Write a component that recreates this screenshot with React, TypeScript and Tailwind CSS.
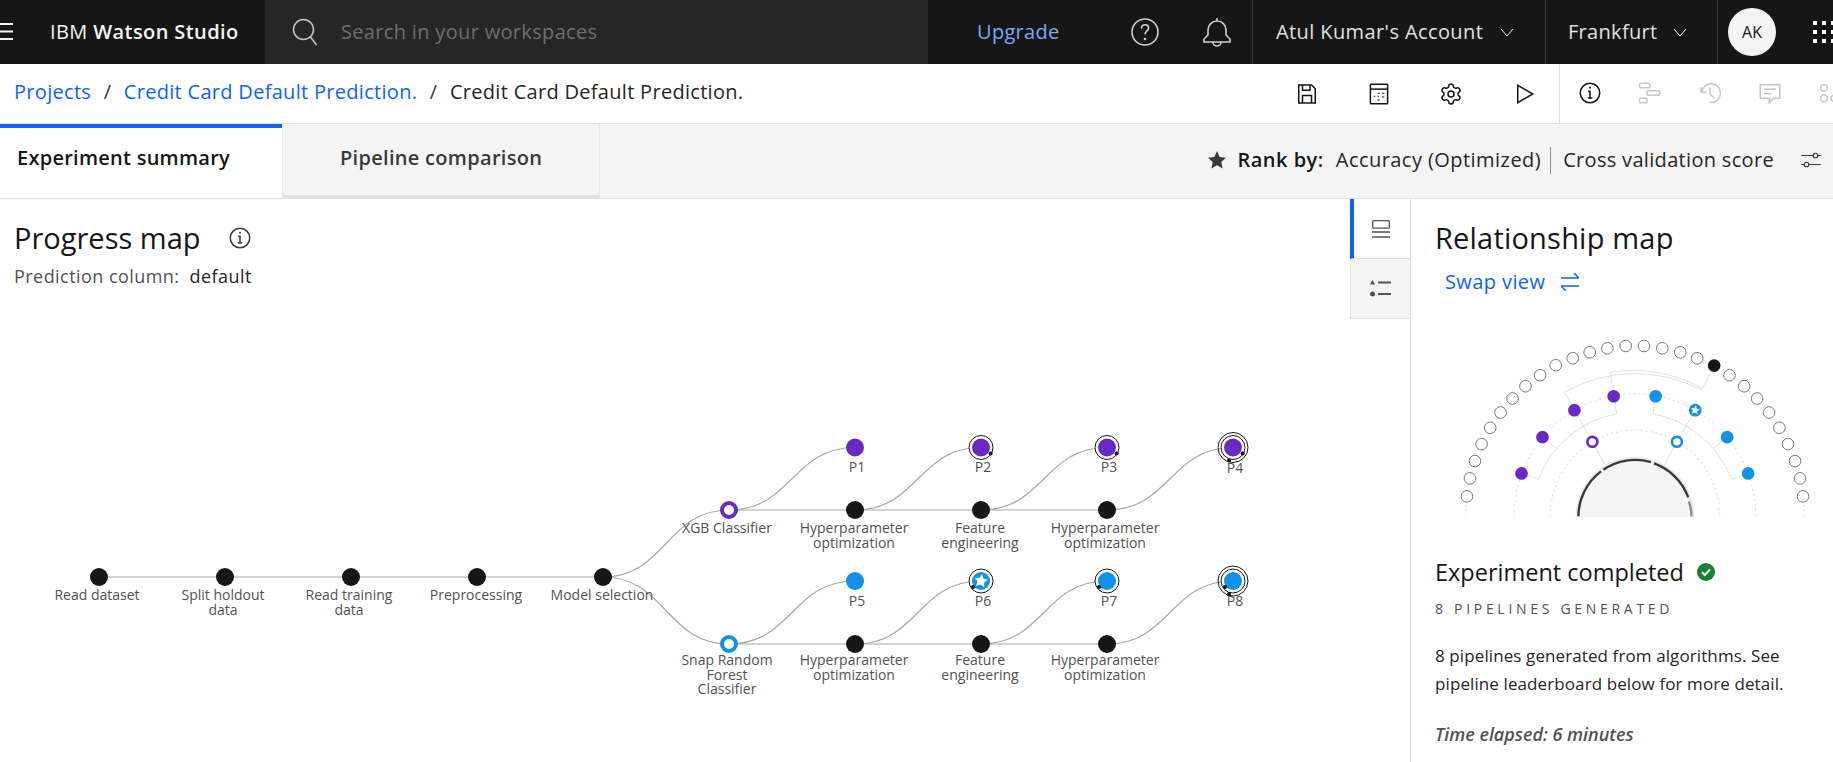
import React from "react";
import { Settings } from "lucide-react";

const PURPLE = "#6929c4";
const BLUE = "#1192e8";
const INK = "#161616";

const Icon = ({ children, size = 24, view = 32, className = "" }: { children: React.ReactNode; size?: number; view?: number; className?: string }) => (
  <svg width={size} height={size} viewBox={`0 0 ${view} ${view}`} fill="none" stroke="currentColor" strokeWidth={2} className={`shrink-0 ${className}`}>
    {children}
  </svg>
);

const Chevron = () => (
  <svg width="16" height="16" viewBox="0 0 16 16" fill="none" stroke="currentColor" strokeWidth={1} className="shrink-0">
    <path d="M2 5l6 7 6-7" />
  </svg>
);

const InfoIcon = ({ size = 24 }: { size?: number }) => (
  <Icon size={size}>
    <circle cx="16" cy="16" r="13" />
    <path d="M13 22.5h6M16 22.5V13.5h-2.5" />
    <circle cx="16" cy="9" r="1.4" fill="currentColor" stroke="none" />
  </Icon>
);

const Header = () => (
  <header className="flex h-16 items-stretch bg-[#161616] text-[#f4f4f4]">
    <div className="flex w-[265px] shrink-0 items-center">
      <svg width="13" height="18" viewBox="0 0 13 18" className="shrink-0">
        <path d="M0 1h13M0 8.5h13M0 16h13" stroke="#f4f4f4" strokeWidth={2} />
      </svg>
      <span className="ml-[37px] whitespace-nowrap text-[20px] tracking-[0.4px]">
        IBM <span className="font-semibold">Watson Studio</span>
      </span>
    </div>
    <div className="flex w-[663px] shrink-0 items-center bg-[#262626] pl-[27px] text-[#c6c6c6]">
      <svg width="26" height="28" viewBox="0 0 26 28" fill="none" stroke="currentColor" strokeWidth={1.5} className="shrink-0">
        <circle cx="11.5" cy="11.5" r="10" />
        <path d="M18.5 19l6 8" />
      </svg>
      <span className="ml-[23px] text-[20px] tracking-[0.33px] text-[#6f6f6f]">Search in your workspaces</span>
    </div>
    <div className="flex w-[324px] shrink-0 items-center text-[#d0d0d0]">
      <a href="#" className="ml-[49px] text-[20px] tracking-[0.3px] text-[#78a9ff]">Upgrade</a>
      <Icon size={32} className="ml-[69px]">
        <circle cx="16" cy="16" r="13" strokeWidth={1.6} />
        <path d="M12.5 12.5c0-2.3 1.6-3.7 3.6-3.7s3.5 1.4 3.5 3.3c0 3.2-3.6 3-3.6 6.4" strokeWidth={1.6} />
        <circle cx="16" cy="23" r="1.3" fill="currentColor" stroke="none" />
      </Icon>
      <Icon size={32} className="ml-[40px]">
        <path d="M16 2v3M16 5a9 9 0 0 0-9 9v5l-4 4v3h26v-3l-4-4v-5a9 9 0 0 0-9-9zM12 26a4 4 0 0 0 8 0" strokeWidth={1.6} />
      </Icon>
    </div>
    <div className="flex w-[293px] shrink-0 items-center border-l border-[#393939] pl-[23px]">
      <span className="whitespace-nowrap text-[20px] tracking-[0.4px] text-[#e0e0e0]">Atul Kumar&#39;s Account</span>
      <span className="ml-[16px]"><Chevron /></span>
    </div>
    <div className="flex w-[172px] shrink-0 items-center border-l border-[#393939] pl-[22px]">
      <span className="text-[20px] tracking-[0.3px] text-[#e0e0e0]">Frankfurt</span>
      <span className="ml-[15px]"><Chevron /></span>
    </div>
    <div className="flex flex-1 items-center border-l border-[#393939] pl-[10px]">
      <div className="flex h-12 w-12 shrink-0 items-center justify-center rounded-full bg-[#f4f4f4] text-[16px] text-[#161616]">AK</div>
      <div className="ml-[37px] grid shrink-0 grid-cols-[repeat(3,4px)] gap-x-[5px] gap-y-[5px]">
        {Array.from({ length: 9 }).map((_, i) => (
          <span key={i} className="h-1 w-1 bg-white" />
        ))}
      </div>
    </div>
  </header>
);

const Toolbar = () => (
  <div className="flex h-[59px] items-stretch bg-white">
    <nav className="flex flex-1 items-center whitespace-nowrap pb-[4px] pl-[14px] text-[20px] tracking-[0.3px]">
      <a href="#" className="text-[#0f62fe]">Projects</a>
      <span className="mx-[12.5px] text-[#393939]">/</span>
      <a href="#" className="text-[#0f62fe]">Credit Card Default Prediction.</a>
      <span className="mx-[12.5px] text-[#393939]">/</span>
      <span className="text-[#262626]">Credit Card Default Prediction.</span>
    </nav>
    <div className="flex items-center gap-[48px] pr-[24px] text-[#161616]">
      <Icon>
        <path d="M5 4h17l5 5v19H5zM10 28V18h12v10M10 4v7h10V4" />
      </Icon>
      <Icon>
        <rect x="4.500" y="3" width="23" height="26" rx="1" />
        <path d="M4.500 9.500h23" />
        <path d="M14 15h3M20 15h3M9 19h2M14 19h2M20 20h3M14 24h3" strokeWidth={1.6} />
      </Icon>
      <Settings size={24} strokeWidth={1.5} className="shrink-0" />
      <Icon>
        <path d="M9 4.500L29 16 9 27.500z" />
      </Icon>
    </div>
    <div className="flex w-[274px] shrink-0 items-center gap-[36px] overflow-hidden border-l border-[#e0e0e0] pb-[2px] pl-[18px] text-[#c6c6c6]">
      <span className="text-[#161616]"><InfoIcon /></span>
      <Icon>
        <rect x="2" y="3" width="14" height="6" rx="1.500" />
        <rect x="12" y="13" width="17" height="6" rx="1.500" />
        <rect x="2" y="23" width="10" height="6" rx="1.500" />
      </Icon>
      <Icon>
        <path d="M4 8v7h7M5 15A12.500 12.500 0 1 1 16 28.500M16 9v8l6 6" />
      </Icon>
      <Icon>
        <path d="M3 5h26v18H20l-4 6h-2l2-6H3zM8 11h16M8 17h10" />
      </Icon>
      <Icon>
        <circle cx="8" cy="9" r="4.500" />
        <circle cx="8" cy="23" r="4.500" />
        <circle cx="22" cy="23" r="4.500" />
      </Icon>
    </div>
  </div>
);

const Tabs = () => (
  <div className="flex h-[76px] items-stretch border-y border-[#e0e0e0] bg-[#f4f4f4]">
    <div className="flex w-[282px] shrink-0 items-center border-t-4 border-[#0f62fe] bg-white pb-[10px] pl-[17px] text-[20px] font-semibold tracking-[0.26px] text-[#161616]">
      Experiment summary
    </div>
    <div className="flex w-[318px] shrink-0 items-center border-x border-b-[3px] border-x-[#e8e8e8] border-b-[#e0e0e0] pb-[3px] pl-[57px] text-[20px] font-semibold tracking-[0.3px] text-[#393939]">
      Pipeline comparison
    </div>
    <div className="flex flex-1 items-center justify-end pb-[2px] pr-[10px] text-[#161616]">
      <svg width="20" height="20" viewBox="0 0 20 20" fill="#393939" className="shrink-0">
        <path d="M10 1l2.700 6 6.300.7-4.700 4.300 1.300 6.500L10 15.200 4.400 18.500 5.700 12 1 7.700 7.300 7z" />
      </svg>
      <span className="ml-[10px] text-[20px] font-semibold tracking-[0.5px]">Rank by:</span>
      <span className="ml-[12px] text-[20px] tracking-[0.45px] text-[#262626]">Accuracy (Optimized)</span>
      <span className="ml-[9px] h-[27px] w-px bg-[#8d8d8d]" />
      <span className="ml-[12px] text-[20px] tracking-[0.32px] text-[#262626]">Cross validation score</span>
      <Icon size={24} className="ml-[25px] text-[#393939]">
        <path d="M3 10h16M25 10h4M3 22h4M13 22h16" strokeWidth={1.6} />
        <circle cx="22" cy="10" r="3" strokeWidth={1.6} />
        <circle cx="10" cy="22" r="3" strokeWidth={1.6} />
      </Icon>
    </div>
  </div>
);

const curve = (x1: number, y1: number, x2: number, y2: number) => {
  const mid = (x1 + x2) / 2;
  return `M${x1} ${y1}C${mid} ${y1} ${mid} ${y2} ${x2} ${y2}`;
};

// x centre, first baseline, box width (the width decides where a label wraps), text
const labels: [number, number, number, string][] = [
  [97, 600, 130, "Read dataset"],
  [223, 600, 96, "Split holdout data"],
  [349, 600, 96, "Read training data"],
  [476, 600, 130, "Preprocessing"],
  [602, 600, 130, "Model selection"],
  [727, 533, 130, "XGB Classifier"],
  [727, 665, 96, "Snap Random Forest Classifier"],
  [854, 533, 120, "Hyperparameter optimization"],
  [980, 533, 96, "Feature engineering"],
  [1105, 533, 120, "Hyperparameter optimization"],
  [854, 665, 120, "Hyperparameter optimization"],
  [980, 665, 96, "Feature engineering"],
  [1105, 665, 120, "Hyperparameter optimization"],
  [857, 472, 40, "P1"],
  [983, 472, 40, "P2"],
  [1109, 472, 40, "P3"],
  [1235, 473, 40, "P4"],
  [857, 606, 40, "P5"],
  [983, 606, 40, "P6"],
  [1109, 606, 40, "P7"],
  [1235, 606, 40, "P8"],
];

const Star = ({ x, y, r }: { x: number; y: number; r: number }) => {
  const pts = Array.from({ length: 10 })
    .map((_, i) => {
      const a = (Math.PI / 5) * i - Math.PI / 2 + 0.15;
      const rad = i % 2 === 0 ? r : r * 0.5;
      return `${x + rad * Math.cos(a)},${y + rad * Math.sin(a)}`;
    })
    .join(" ");
  return <polygon points={pts} fill="#fff" />;
};

const Ringed = ({ x, y, fill, rings, left }: { x: number; y: number; fill: string; rings: number; left?: boolean }) => {
  const dx = left ? -8 : 9.6;
  return (
    <g>
      <circle cx={x} cy={y} r="12" fill="#fff" stroke={INK} />
      {rings > 1 && <circle cx={x} cy={y} r="15" fill="none" stroke={INK} />}
      <circle cx={x} cy={y} r="9" fill={fill} />
      <circle cx={x + dx} cy={y + 6} r="2" fill={INK} />
      {rings > 1 && <circle cx={x - 4} cy={y + 13} r="2" fill={INK} />}
    </g>
  );
};

const ProgressMap = () => {
  const stem = [99, 225, 351, 477, 603];
  const row = [855, 981, 1107];
  return (
    <div className="relative mt-[113px] h-[320px] w-[1350px]">
      <svg width="1350" height="320" viewBox="0 400 1350 320" className="block">
        <g fill="none" stroke="#a8a8a8" strokeWidth={1.2}>
          <path d="M99 576H603" />
          <path d="M729 509H1107" />
          <path d="M729 643H1107" />
          <path d={curve(603, 576, 729, 509)} />
          <path d={curve(603, 576, 729, 643)} />
          {[0, 1, 2, 3].map((i) => (
            <path key={i} d={curve(729 + i * 126, 509, 855 + i * 126, 446.500)} />
          ))}
          {[0, 1, 2, 3].map((i) => (
            <path key={i} d={curve(729 + i * 126, 643, 855 + i * 126, 580)} />
          ))}
        </g>
        {stem.map((x) => (
          <circle key={x} cx={x} cy="576" r="9" fill={INK} />
        ))}
        {row.map((x) => (
          <React.Fragment key={x}>
            <circle cx={x} cy="509" r="9" fill={INK} />
            <circle cx={x} cy="643" r="9" fill={INK} />
          </React.Fragment>
        ))}
        <circle cx="729" cy="509" r="7" fill="#fff" stroke={PURPLE} strokeWidth={4} />
        <circle cx="729" cy="643" r="7" fill="#fff" stroke={BLUE} strokeWidth={4} />
        <circle cx="855" cy="446.500" r="9" fill={PURPLE} />
        <Ringed x={981} y={446.5} fill={PURPLE} rings={1} />
        <Ringed x={1107} y={446.5} fill={PURPLE} rings={1} />
        <Ringed x={1233} y={446.5} fill={PURPLE} rings={2} />
        <circle cx="855" cy="580" r="9" fill={BLUE} />
        <Ringed x={981} y={580} fill={BLUE} rings={1} left />
        <Star x={981} y={580} r={7} />
        <Ringed x={1107} y={580} fill={BLUE} rings={1} left />
        <Ringed x={1233} y={580} fill={BLUE} rings={2} left />
      </svg>
      {labels.map(([x, y, w, text]) => (
        <div
          key={`${x}-${y}`}
          className="absolute text-center text-[14px] leading-[14.5px] text-[#525252]"
          style={{ left: x - w / 2, top: y - 400 - 13, width: w }}
        >
          {text}
        </div>
      ))}
    </div>
  );
};

// positions read off the reference at 3x, so the group is drawn in that scale
const outer: [number, number][] = [
  [140, 530], [149, 476], [164, 424], [184, 373], [210, 324], [241, 278], [277, 236], [316, 199], [360, 166], [407, 136],
  [458, 115], [509, 97], [562, 85], [617, 78], [672, 78], [727, 85], [781, 97], [832, 115], [929, 166], [973, 199],
  [1012, 236], [1048, 278], [1079, 324], [1105, 373], [1126, 424], [1141, 476], [1150, 530],
];

const RelationshipMap = () => (
  <svg width="413" height="197" viewBox="0 0 1239 592" className="ml-[9px] block">
    <g fill="none" stroke="#e0e0e0" strokeWidth={3}>
      <path d="M304 461L355 479A312 312 0 0 1 590 282L581 229" />
      <path d="M367 352L407 385" />
      <path d="M985 461L935 479A312 312 0 0 0 699 282L707 229" />
      <path d="M922 352L882 385" />
      <path d="M463 271L517 366L555 435" />
      <path d="M826 271L771 366L733 435" />
      <path d="M463 271L433 217A429 429 0 0 1 845 210L883 137" />
      <path d="M581 229L570 157A439 439 0 0 1 845 204" />
    </g>
    <g fill="none" stroke="#d0d0d0" strokeWidth={3} strokeDasharray="5 10">
      <path d="M282 590A363 368 0 0 1 1008 590" />
      <path d="M390 590A255 259 0 0 1 900 590" />
      <path d="M137 590V555M1153 590V555" />
    </g>
    <circle cx="645" cy="590" r="178" fill="#e8e8e8" />
    <circle cx="645" cy="590" r="172" fill="#f4f4f4" />
    <g fill="none" stroke="#393939" strokeWidth={7}>
      <path d="M475 590A170 170 0 0 1 543 455" />
      <path d="M550 450A170 170 0 0 1 693 427" />
      <path d="M702 431A170 170 0 0 1 805 533" />
      <path d="M807 545A170 170 0 0 1 815 590" stroke="#8d8d8d" />
    </g>
    {outer.map(([x, y]) => (
      <circle key={`${x}-${y}`} cx={x} cy={y} r="17.500" fill="#fff" stroke="#767676" strokeWidth={3} />
    ))}
    <circle cx="883" cy="137" r="19" fill={INK} />
    {[[304, 461], [367, 352], [463, 271], [581, 229]].map(([x, y]) => (
      <circle key={x} cx={x} cy={y} r="19" fill={PURPLE} />
    ))}
    {[[707, 229], [922, 352], [985, 461], [826, 271]].map(([x, y]) => (
      <circle key={x} cx={x} cy={y} r="19" fill={BLUE} />
    ))}
    <Star x={826} y={271} r={14} />
    <circle cx="517" cy="366" r="15" fill="#fff" stroke={PURPLE} strokeWidth={8} />
    <circle cx="771" cy="366" r="15" fill="#fff" stroke={BLUE} strokeWidth={8} />
  </svg>
);

const SideRail = () => (
  <div className="w-[60px] shrink-0">
    <div className="flex h-[60px] items-center justify-center border-b border-l-4 border-b-[#e0e0e0] border-l-[#0f62fe] bg-white text-[#525252]">
      <svg width="18" height="18" viewBox="0 0 18 18" fill="none" stroke="currentColor" strokeWidth={1.300} className="-ml-[2px]">
        <rect x="0.700" y="0.700" width="16.600" height="7.500" rx="1" />
        <path d="M0 12h18M0 17h18" />
      </svg>
    </div>
    <div className="flex h-[60px] items-center justify-center border-b border-l border-[#e0e0e0] bg-[#f4f4f4] text-[#525252]">
      <svg width="22" height="18" viewBox="0 0 22 18" fill="currentColor">
        <path d="M2.500 0l2.500 4.500H0z" />
        <rect x="8" y="1.500" width="13" height="2" />
        <circle cx="2.500" cy="14" r="2.500" />
        <rect x="8" y="13" width="13" height="2" />
      </svg>
    </div>
  </div>
);

const App = () => {
  return (
    <div className="h-[762px] w-[1833px] overflow-hidden bg-white font-['Open_Sans',sans-serif] text-[#161616]">
      <Header />
      <Toolbar />
      <Tabs />
      <main className="flex h-[563px]">
        <section className="w-[1350px] shrink-0 pl-[14px]">
          <div className="flex items-center pt-[20px]">
            <h1 className="text-[29px] leading-[38px]">Progress map</h1>
            <span className="ml-[27px] text-[#393939]"><InfoIcon size={24} /></span>
          </div>
          <p className="mt-[7px] text-[18px] leading-[24px] tracking-[0.45px] text-[#525252]">
            Prediction column:<span className="ml-[10px] text-[#262626]">default</span>
          </p>
          <div className="-ml-[14px]">
            <ProgressMap />
          </div>
        </section>
        <SideRail />
        <aside className="flex-1 border-l border-[#e0e0e0]">
          <div className="pl-[24px] pt-[20px]">
            <h2 className="text-[29px] leading-[38px] tracking-[0.2px]">Relationship map</h2>
            <a href="#" className="ml-[10px] mt-[12px] flex items-center text-[20px] leading-[26px] tracking-[0.4px] text-[#0f62fe]">
              Swap view
              <svg width="18" height="18" viewBox="0 0 18 18" fill="none" stroke="currentColor" strokeWidth={1.500} className="ml-[16px]">
                <path d="M0 5h18M13 0l5 5M18 13H0M5 18l-5-5" />
              </svg>
            </a>
          </div>
          <div className="mt-[25px]">
            <RelationshipMap />
          </div>
          <div className="pl-[24px] pt-[39px]">
            <div className="flex items-center">
              <h3 className="text-[23.5px] leading-[32px]">Experiment completed</h3>
              <svg width="18" height="18" viewBox="0 0 18 18" className="ml-[13px]">
                <circle cx="9" cy="9" r="9" fill="#198038" />
                <path d="M5 9.200l2.800 2.800L13 6.500" fill="none" stroke="#fff" strokeWidth={2} />
              </svg>
            </div>
            <p className="mt-[12px] text-[14px] leading-[18px] tracking-[3.7px] text-[#525252]">8 PIPELINES GENERATED</p>
            <p className="mt-[24px] w-[400px] text-[17px] leading-[28px] tracking-[0.1px] text-[#262626]">
              8 pipelines generated from algorithms. See pipeline leaderboard below for more detail.
            </p>
            <p className="mt-[23px] text-[18px] font-semibold italic leading-[27px] text-[#525252]">Time elapsed: 6 minutes</p>
          </div>
        </aside>
      </main>
    </div>
  );
};

export default App;
